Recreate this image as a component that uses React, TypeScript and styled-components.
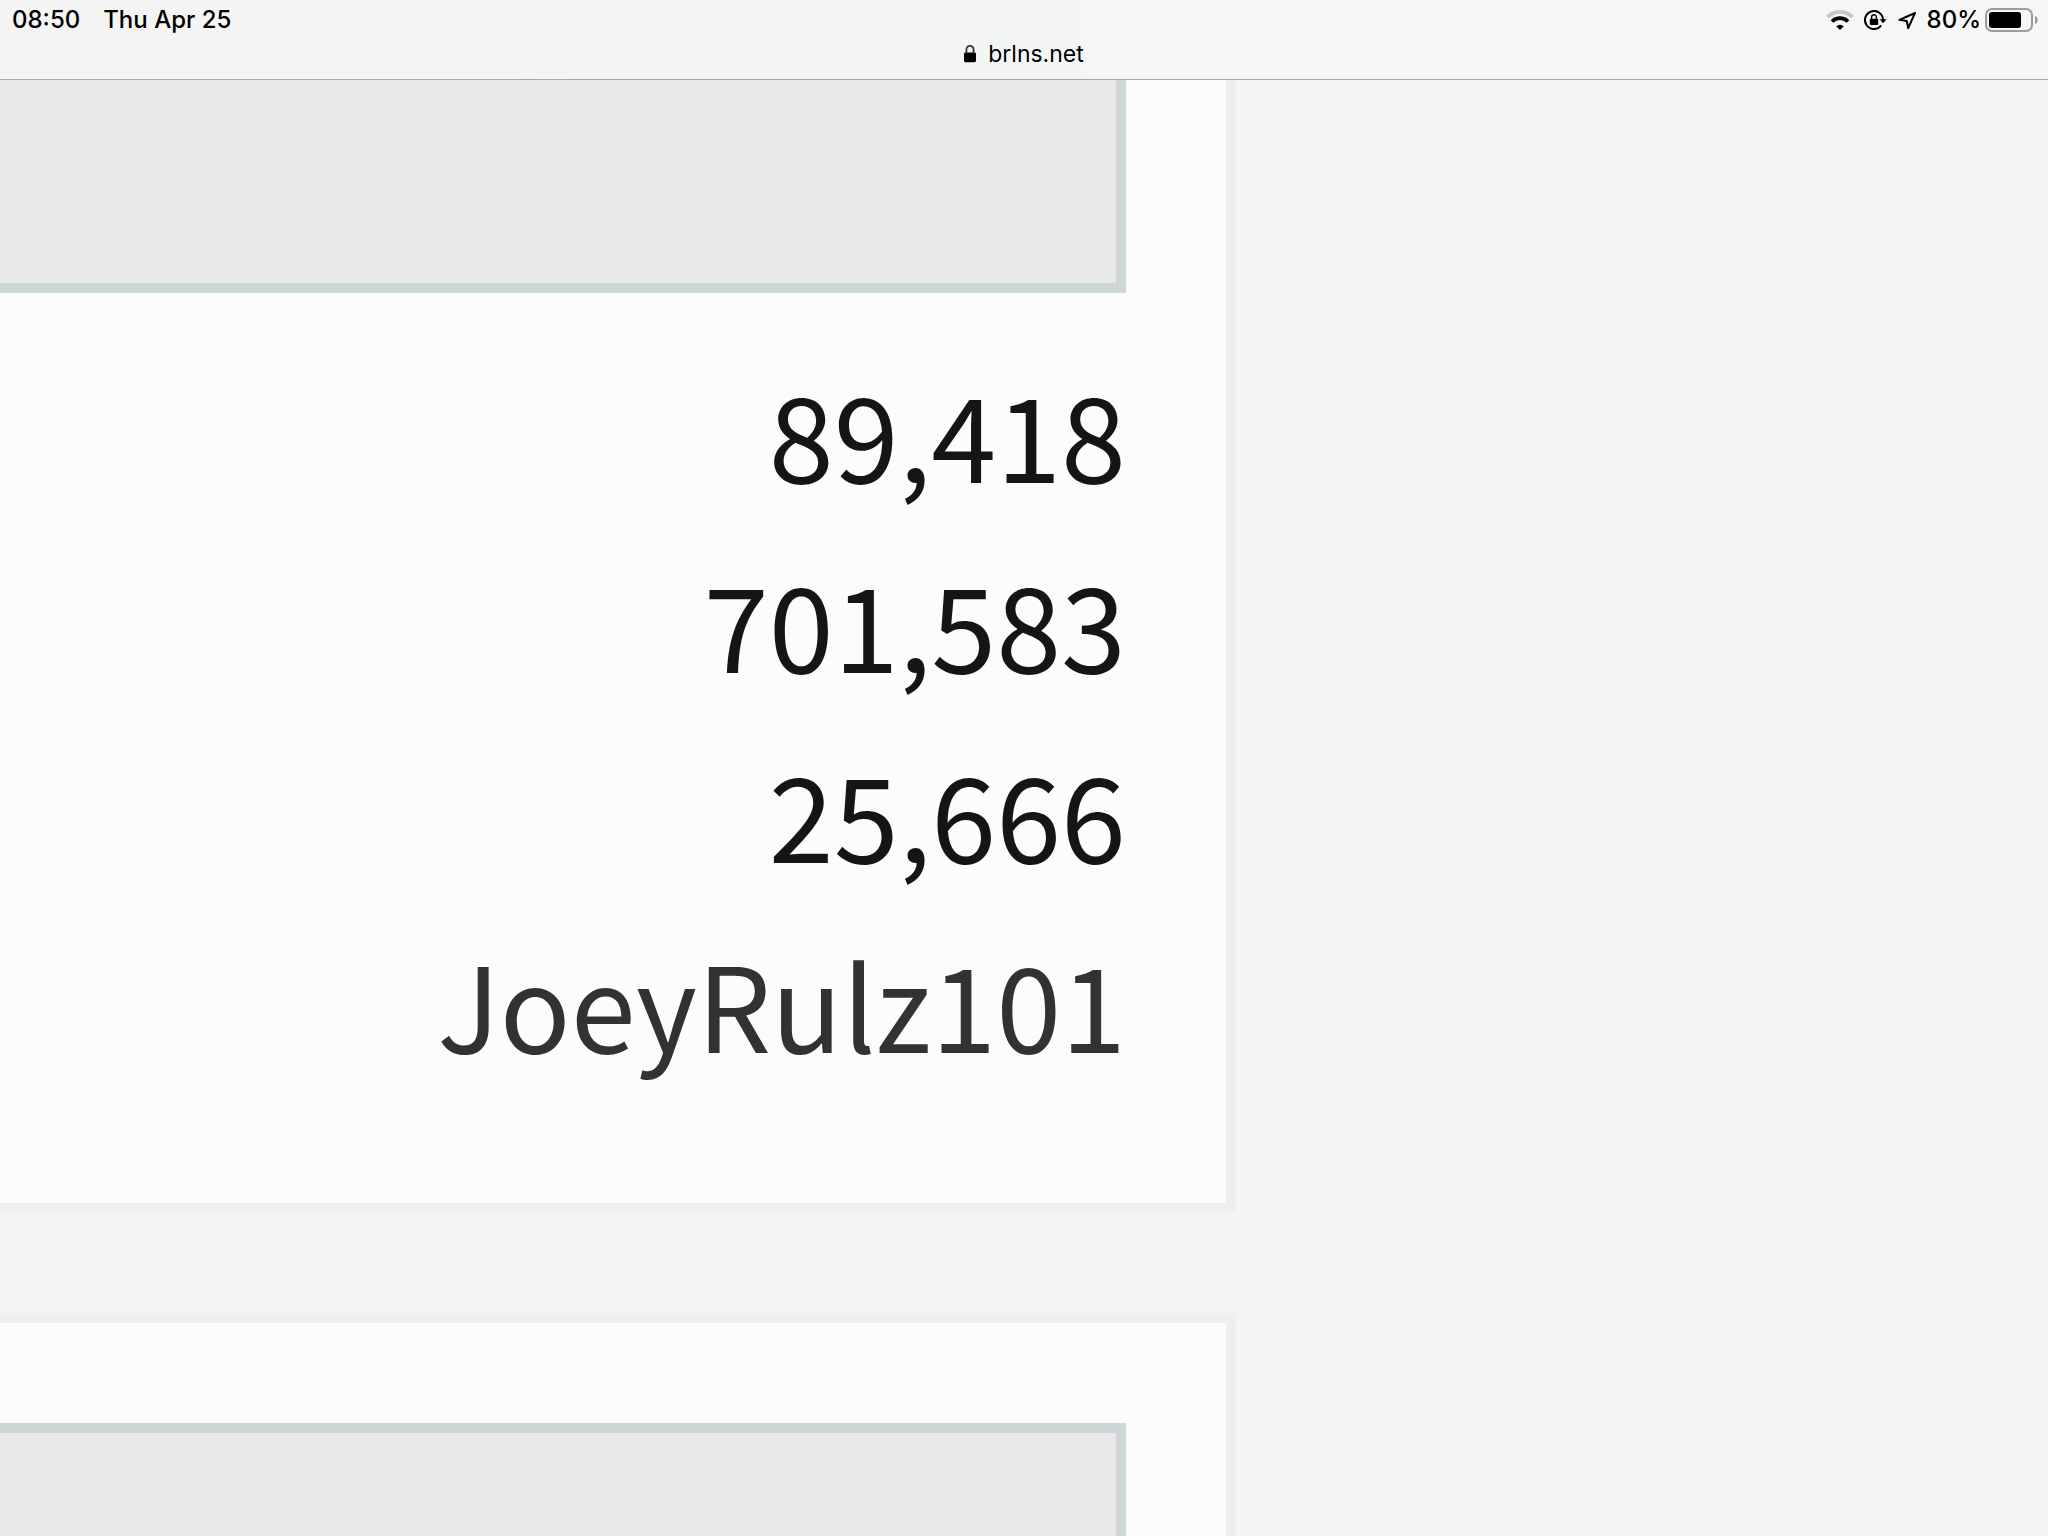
import React from "react";
import styled, { createGlobalStyle } from "styled-components";

const GlobalStyle = createGlobalStyle`
  *, *::before, *::after { box-sizing: border-box; }
  body { margin: 0; background: #f5f5f5; }
`;

const Screen = styled.div`
  display: flex;
  flex-direction: column;
  min-height: 100vh;
  background: #f5f5f5;
  font-family: Inter, "Liberation Sans", sans-serif;
`;

const BrowserBar = styled.header`
  display: flex;
  flex-direction: column;
  background: linear-gradient(90deg, #f4f4f4 0%, #f4f5f5 50%, #f6f6f6 58%, #f6f6f6 100%);
  border-bottom: 1px solid #a9a9a9;
  color: #000;
`;

const StatusRow = styled.div`
  display: flex;
  align-items: center;
  justify-content: space-between;
  height: 40px;
  padding: 0 10px 0 12px;
  font-size: 24px;
  font-weight: 500;
  line-height: 40px;
`;

const StatusGroup = styled.div<{ $gap: number }>`
  display: flex;
  align-items: center;
  gap: ${(p) => p.$gap}px;
`;

const BatteryGroup = styled.div`
  display: flex;
  align-items: center;
  gap: 4px;
`;

const Icon = styled.svg`
  display: block;
  flex: none;
`;

const AddressRow = styled.div`
  display: flex;
  justify-content: center;
  padding-bottom: 11px;
`;

const AddressButton = styled.button`
  display: flex;
  align-items: center;
  gap: 12px;
  padding: 0;
  border: 0;
  background: none;
  color: #000;
  font-family: inherit;
  font-size: 23px;
  line-height: 28px;
`;

const Content = styled.main`
  display: flex;
  flex: 1;
  flex-direction: column;
  gap: 100px;
  width: 100%;
  max-width: 1236px;
`;

const Card = styled.section<{ $edge: "top" | "bottom" }>`
  display: flex;
  flex-direction: column;
  flex: ${(p) => (p.$edge === "top" ? "1" : "none")};
  padding: ${(p) => (p.$edge === "top" ? "100px 100px 0 0" : "0 100px 100px 0")};
  border: 0 solid #efefef;
  border-right-width: 10px;
  border-${(p) => p.$edge}-width: 10px;
  background: #fcfcfc;
`;

const Panel = styled.div<{ $edge: "top" | "bottom" }>`
  flex: ${(p) => (p.$edge === "top" ? "1" : "none")};
  min-height: ${(p) => (p.$edge === "top" ? "113px" : "213px")};
  border: 0 solid #ced6d8;
  border-right-width: 10px;
  border-${(p) => p.$edge}-width: 10px;
  background: #e8e8e8;
`;

const Stats = styled.ul`
  margin: 0;
  padding: 44px 0 6px;
  list-style: none;
  font-family: "Noto Sans CJK JP", "Noto Sans", sans-serif;
  font-size: 117px;
  line-height: 190px;
  text-align: right;
`;

const Stat = styled.li`
  height: 190px;
  color: #151515;
`;

const PlayerLink = styled.a`
  color: #323232;
  text-decoration: none;
`;

const stats = ["89,418", "701,583", "25,666"];

function WifiIcon() {
  return (
    <Icon width="28" height="20" viewBox="0 0 28 20" aria-label="Wi-Fi">
      <path d="M1.6 7A17.6 17.6 0 0 1 26.4 7" fill="none" stroke="#c6c6c6" strokeWidth="3.8" />
      <path d="M6 11.5A11.4 11.4 0 0 1 22 11.5" fill="none" stroke="#000" strokeWidth="3.8" />
      <path d="M14 20L10.2 16.2A5.4 5.4 0 0 1 17.8 16.2Z" fill="#000" />
    </Icon>
  );
}

function RotationLockIcon() {
  return (
    <Icon width="23" height="20" viewBox="0 0 23 20" aria-label="Rotation lock">
      <path d="M17.2 15.4A9 9 0 1 1 19 10" fill="none" stroke="#000" strokeWidth="2" />
      <path d="M15.6 9.2H22.6L19.1 13.2Z" fill="#000" />
      <rect x="5.8" y="8.8" width="8.4" height="6.2" rx="1" fill="#000" />
      <path d="M7.6 9V7.2a2.4 2.4 0 0 1 4.8 0V9" fill="none" stroke="#000" strokeWidth="1.4" />
    </Icon>
  );
}

function LocationIcon() {
  return (
    <Icon width="20" height="20" viewBox="0 0 20 20" aria-label="Location">
      <path
        d="M18 3L2.4 9.8L9.8 11L11.2 18.2Z"
        fill="none"
        stroke="#000"
        strokeWidth="2"
        strokeLinejoin="round"
      />
    </Icon>
  );
}

function BatteryIcon() {
  return (
    <Icon width="53" height="24" viewBox="0 0 53 24" aria-label="Battery">
      <rect x="1" y="1" width="46" height="22" rx="6" fill="none" stroke="#9b9b9b" strokeWidth="2" />
      <rect x="4" y="4" width="32" height="16" rx="3" fill="#000" />
      <path d="M50 8C53.6 9 53.6 15 50 16Z" fill="#9b9b9b" />
    </Icon>
  );
}

function PadlockIcon() {
  return (
    <Icon width="12" height="18" viewBox="0 0 12 18" aria-hidden="true">
      <rect x="0" y="7.4" width="12" height="9.8" rx="1.4" fill="#000" />
      <path d="M2.4 8.6V4.6a3.6 3.7 0 0 1 7.2 0v4" fill="none" stroke="#333" strokeWidth="1.8" />
    </Icon>
  );
}

export default function App() {
  return (
    <>
      <GlobalStyle />
      <Screen>
        <BrowserBar>
          <StatusRow>
            <StatusGroup $gap={23}>
              <span>08:50</span>
              <span>Thu Apr 25</span>
            </StatusGroup>
            <StatusGroup $gap={10}>
              <WifiIcon />
              <RotationLockIcon />
              <LocationIcon />
              <BatteryGroup>
                <span>80%</span>
                <BatteryIcon />
              </BatteryGroup>
            </StatusGroup>
          </StatusRow>
          <AddressRow>
            <AddressButton type="button">
              <PadlockIcon />
              <span>brlns.net</span>
            </AddressButton>
          </AddressRow>
        </BrowserBar>
        <Content>
          <Card $edge="bottom">
            <Panel $edge="bottom" />
            <Stats>
              {stats.map((value) => (
                <Stat key={value}>{value}</Stat>
              ))}
              <Stat>
                <PlayerLink href="#player">JoeyRulz101</PlayerLink>
              </Stat>
            </Stats>
          </Card>
          <Card $edge="top">
            <Panel $edge="top" />
          </Card>
        </Content>
      </Screen>
    </>
  );
}
